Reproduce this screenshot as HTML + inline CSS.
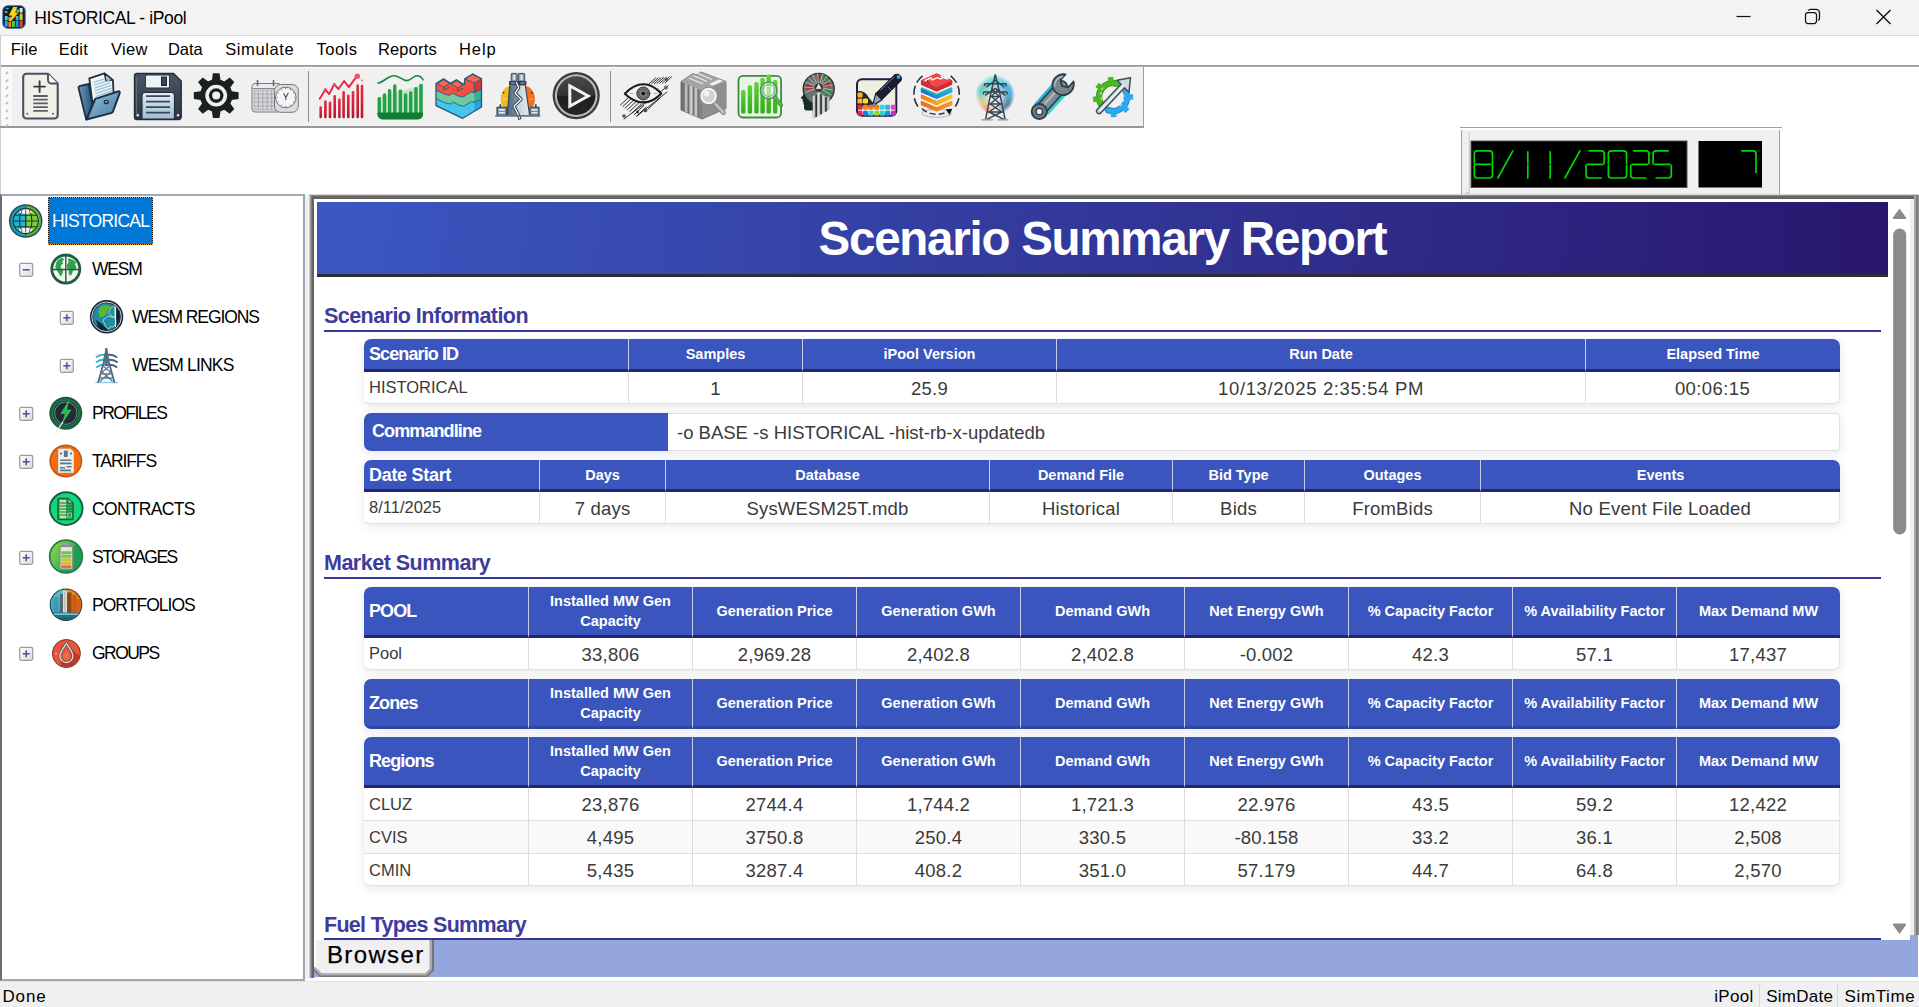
<!DOCTYPE html>
<html>
<head>
<meta charset="utf-8">
<title>HISTORICAL - iPool</title>
<style>
*{box-sizing:border-box;margin:0;padding:0}
html,body{width:1919px;height:1007px;overflow:hidden;background:#fff;font-family:"Liberation Sans",sans-serif;}
.abs{position:absolute}
#titlebar{position:absolute;left:0;top:0;width:1919px;height:35px;background:#f3f3f3}
#titlebar .ttl{position:absolute;left:34.300px;top:6px;letter-spacing:-0.36px;font-size:17.5px;line-height:24px;color:#000;white-space:nowrap}
#tline{position:absolute;left:0;top:35px;width:1919px;height:1px;background:#dadada}
#menubar{position:absolute;left:0;top:36px;width:1919px;height:29px;background:#fff}
#menubar span{position:absolute;top:1.300px;font-size:16.5px;line-height:24px;color:#000;white-space:nowrap}
#mline{position:absolute;left:0;top:65px;width:1919px;height:2px;background:linear-gradient(#8e8e8e,#b4b4b4)}
#toolbar{position:absolute;left:0;top:67px;width:1144px;height:61px;background:#f0f0f0;border-right:1px solid #a0a0a0;border-bottom:2px solid #979797;box-shadow:inset 0 1px 0 #fcfcfc}
#toolbar .grip{position:absolute;left:0;top:0;width:12px;height:59px;background:#f9f9f9;border-left:1px solid #cfcfcf}
#toolbar .sep{position:absolute;top:4px;width:1px;height:51px;background:#8f8f8f}
.ti{position:absolute;top:3px;width:52px;height:52px}
/* LED */
#led{position:absolute;left:1460px;top:127px;width:322px;height:68px;border-top:1px solid #a0a0a0}
#led .in{position:absolute;left:1px;top:2px;width:319px;height:66px;background:#f0f0f0;border-left:1px solid #a0a0a0;border-right:1px solid #a0a0a0}
/* tree */
#tree{position:absolute;left:0;top:194px;width:305px;height:787px;background:#fff;border-style:solid;border-color:#a4a8b2 #a2a6b0 #a2a6b0 #686d78;border-width:2px 2px 2px 2px}
#gap{position:absolute;left:305px;top:195px;width:4px;height:784px;background:#f0f0f0}
.tr{position:absolute;font-size:17.5px;line-height:24px;color:#000;white-space:nowrap}
.exp{position:absolute;width:13px;height:13px;border:1px solid #919191;background:linear-gradient(135deg,#fff,#e4e4e4);border-radius:1px}
.exp:before{content:"";position:absolute;left:2px;top:5px;width:7px;height:1px;background:#3c4a9a}
.exp.p:after{content:"";position:absolute;left:5px;top:2px;width:1px;height:7px;background:#3c4a9a}
.ic{position:absolute;width:36px;height:36px}
/* right panel */
#rp{position:absolute;left:309px;top:194px;width:1610px;height:787px;background:#fff}
#rp i{position:absolute;display:block}
#view{position:absolute;left:314px;top:199px;width:1596px;height:741px;overflow:hidden;background:#fff}
#hdr{position:absolute;left:3px;top:3px;width:1571px;height:75px;background:linear-gradient(95deg,#3b58c2 0%,#29166d 100%);border-bottom:3px solid #2e2e32;color:#fff;font-weight:700;font-size:47.5px;letter-spacing:-1.25px;text-align:center;line-height:73.5px;white-space:nowrap}
.h2{position:absolute;left:10px;font-weight:700;font-size:21.5px;line-height:26px;color:#3d3c9c;white-space:nowrap;letter-spacing:-0.55px}
.ul{position:absolute;left:10px;width:1557px;height:2px;background:#37379a}
table{position:absolute;left:50px;width:1476px;border-collapse:separate;border-spacing:0;table-layout:fixed;border-radius:6px;box-shadow:0 2px 9px 1px rgba(0,0,0,.085)}
th{background:#3a56be;color:#fff;font-weight:700;font-size:14.5px;line-height:20px;text-align:center;vertical-align:middle;border-bottom:3px solid #21276a;border-left:1px solid #c7cde9;padding:0;position:relative}
th:first-child{text-align:left;font-size:18px;letter-spacing:-0.9px;padding-left:5px;border-left:none;border-top-left-radius:7px}
th:last-child{border-top-right-radius:7px}
th i{position:absolute;left:-1px;top:0;width:1px;height:3px;background:#3a56be}
td{background:#fff;color:#3a3a3a;font-size:18.5px;text-align:center;vertical-align:middle;border-left:1px solid #dcdcdc;border-bottom:1px solid #dedede;padding:2px 0 0 0;letter-spacing:0.2px}
td:first-child{text-align:left;font-size:16.5px;padding:0 0 0 5px;border-left:none;letter-spacing:0}
tr.alt td{background:#f9f9f9}
table.reg td:first-child{padding:1px 0 0 5px}
tr:last-child td:first-child{border-bottom-left-radius:6px}
tr:last-child td:last-child{border-bottom-right-radius:6px}
td:last-child{border-right:1px solid #e2e2e2}
tr:last-child td{border-bottom:1px solid #e0e0e0}
table.nob th{border-bottom:3px solid #2f45a6}
table.nob th:first-child{border-bottom-left-radius:7px}
table.nob th:last-child{border-bottom-right-radius:7px}
#tabbar{position:absolute;left:314px;top:940px;width:1604px;height:37px;background:#95a6dc}
#tabbar2{position:absolute;left:1910px;top:935px;width:8px;height:5px;background:#95a6dc}
#status{position:absolute;left:0;top:981px;width:1919px;height:26px;background:#f0f0f0;border-top:1px solid #e2e2e2}
#status span{position:absolute;top:3.500px;font-size:17px;line-height:22px;white-space:nowrap;color:#000}
#status i{position:absolute;top:2px;width:1px;height:24px;background:#d7d7d7}

.cmd{position:absolute;left:50px;top:214px;width:1476px;height:38px;border-radius:7px 4px 4px 7px;background:#fff;box-shadow:0 2px 9px 1px rgba(0,0,0,.085)}
.cmd .cl{position:absolute;left:0;top:0;width:304px;height:38px;background:#3a56be;border-radius:7px 0 0 7px;color:#fff;font-weight:700;font-size:18px;letter-spacing:-0.9px;line-height:36px;padding-left:8px}
.cmd .cv{position:absolute;left:304px;top:0;width:1172px;height:38px;border:1px solid #e0e0e0;border-left:none;border-radius:0 4px 4px 0;color:#3a3a3a;font-size:18.5px;line-height:38px;padding-left:9px;white-space:nowrap}
.sb{position:absolute;left:1574px;top:-1px;width:22px;height:742px;background:#fff}
</style>
</head>
<body>
<div id="titlebar">
<svg class="abs" style="left:2px;top:5px" width="24" height="24" viewBox="2 5 24 24"><defs><linearGradient id="aY" x1="0" y1="0" x2="1" y2="1"><stop offset="0" stop-color="#fff21a"/><stop offset="1" stop-color="#f2a80e"/></linearGradient></defs><rect x="2.300" y="5.300" width="23.400" height="23.400" rx="5.500" fill="#2c62a6"/><rect x="3.300" y="6.300" width="21.400" height="21.400" rx="4.600" fill="#141c2e"/><rect x="4.800" y="16" width="2.900" height="4.300" fill="#34dcec"/><rect x="4.800" y="21" width="2.900" height="5.500" fill="#22b2ea"/><rect x="5.800" y="7.800" width="3" height="1.500" rx="0.700" fill="#22b8d8"/><rect x="4.800" y="11" width="2.600" height="2" fill="#f08a18"/><rect x="8.400" y="17" width="2.800" height="4" fill="#d8b018"/><rect x="8.400" y="22" width="2.800" height="5" fill="#f08a10"/><rect x="12" y="21" width="2.900" height="6" fill="#52c832"/><rect x="15.700" y="16" width="2.800" height="4.300" fill="#22c4ea"/><rect x="15.700" y="21" width="2.800" height="6" fill="#1a92f0"/><rect x="16.500" y="9.500" width="2.500" height="2.500" fill="#2cc8e0"/><rect x="19.600" y="8" width="3" height="4.500" fill="#dce9c2"/><rect x="19.600" y="13.500" width="3" height="6.800" fill="#e8c222"/><rect x="19.600" y="21" width="3" height="6" fill="#f0441a"/><path d="M13.300 7l4 0 -2 5.500 3.300 0 -8.800 10.300 2 -7.300 -3 0z" fill="url(#aY)"/></svg>
<div class="ttl">HISTORICAL - iPool</div>
<svg class="abs" style="left:1730px;top:5px" width="170" height="24" viewBox="0 0 170 24"><path d="M6.5 11.5h14" stroke="#111" stroke-width="1.2" fill="none"/><path d="M78 7.500h6a2.500 2.500 0 0 1 2.500 2.500v6a2.500 2.500 0 0 1 -2.500 2.500h-6a2.500 2.500 0 0 1 -2.500 -2.500v-6a2.500 2.500 0 0 1 2.500 -2.500z" stroke="#111" stroke-width="1.250" fill="none"/><path d="M78.300 5.600a2.600 2.600 0 0 1 2.300 -1.300h5.400a3.500 3.500 0 0 1 3.500 3.500v5.400a2.600 2.600 0 0 1 -1.300 2.300" stroke="#111" stroke-width="1.250" fill="none"/><path d="M146.500 5l14 14M160.500 5l-14 14" stroke="#111" stroke-width="1.4" fill="none"/></svg>
</div>
<div id="tline"></div>
<div id="menubar">
<span style="left:10.7px;letter-spacing:0.030px">File</span><span style="left:58.7px;letter-spacing:0.200px">Edit</span><span style="left:111.0px;letter-spacing:0.300px">View</span><span style="left:167.9px">Data</span><span style="left:225.2px;letter-spacing:0.600px">Simulate</span><span style="left:316.5px;letter-spacing:0.500px">Tools</span><span style="left:377.9px;letter-spacing:0.170px">Reports</span><span style="left:459.0px;letter-spacing:0.900px">Help</span>
</div>
<div id="mline"></div>
<div class="abs" style="left:0;top:36px;width:1px;height:158px;background:#cdcdcd"></div>
<div id="toolbar">
<div class="grip"><svg width="12" height="60" viewBox="0 0 12 60"><path d="M4.800 7.1l2.400 -2.400" stroke="#bdbdbd" stroke-width="1.600"/><path d="M4.800 14.9l2.400 -2.400" stroke="#bdbdbd" stroke-width="1.600"/><path d="M4.800 22.2l2.400 -2.400" stroke="#bdbdbd" stroke-width="1.600"/><path d="M4.800 30.0l2.400 -2.400" stroke="#bdbdbd" stroke-width="1.600"/><path d="M4.800 37.3l2.400 -2.400" stroke="#bdbdbd" stroke-width="1.600"/><path d="M4.800 45.1l2.400 -2.400" stroke="#bdbdbd" stroke-width="1.600"/><path d="M4.800 52.4l2.400 -2.400" stroke="#bdbdbd" stroke-width="1.600"/><path d="M4.800 59.7l2.400 -2.400" stroke="#bdbdbd" stroke-width="1.600"/></svg></div>
<div class="sep" style="left:308px"></div>
<div class="sep" style="left:610px"></div>
<svg class="abs" style="left:0;top:0" width="1144" height="60" viewBox="0 67 1144 60"><defs><linearGradient id="gRed" x1="0" y1="0" x2="0" y2="1"><stop offset="0" stop-color="#f02a44"/><stop offset="1" stop-color="#b4172e"/></linearGradient><linearGradient id="gFold" x1="0" y1="0" x2="1" y2="1"><stop offset="0" stop-color="#9cc3da"/><stop offset="1" stop-color="#3f7aa3"/></linearGradient><linearGradient id="gFoldB" x1="0" y1="0" x2="1" y2="0"><stop offset="0" stop-color="#6a9cc0"/><stop offset="1" stop-color="#274f75"/></linearGradient><linearGradient id="gFlop" x1="0" y1="0" x2="0" y2="1"><stop offset="0" stop-color="#4a5566"/><stop offset="1" stop-color="#2c3543"/></linearGradient><linearGradient id="gFlopL" x1="0" y1="0" x2="0" y2="1"><stop offset="0" stop-color="#e4edf3"/><stop offset="1" stop-color="#9fbdd2"/></linearGradient><linearGradient id="gPlay" x1="0" y1="0" x2="0" y2="1"><stop offset="0" stop-color="#4a4a4a"/><stop offset="0.5" stop-color="#333"/><stop offset="0.5" stop-color="#1e1e1e"/><stop offset="1" stop-color="#262626"/></linearGradient><linearGradient id="gGray" x1="0" y1="0" x2="1" y2="0"><stop offset="0" stop-color="#666"/><stop offset="0.5" stop-color="#b2b2b2"/><stop offset="1" stop-color="#7c7c7c"/></linearGradient><linearGradient id="gGrn" x1="0" y1="0" x2="0" y2="1"><stop offset="0" stop-color="#62d23a"/><stop offset="1" stop-color="#2fae1c"/></linearGradient><radialGradient id="gTow" cx="0.5" cy="0.5" r="0.5"><stop offset="0" stop-color="#ffffff" stop-opacity="0"/><stop offset="1" stop-color="#fff" stop-opacity="0"/></radialGradient><linearGradient id="gTowBg" x1="0.8" y1="0" x2="0.2" y2="1"><stop offset="0" stop-color="#8fdde6"/><stop offset="0.45" stop-color="#6fb0d2"/><stop offset="0.75" stop-color="#b9c6c8"/><stop offset="1" stop-color="#f2978a"/></linearGradient></defs><g><path d="M26.5 73.8h21.500l9.700 9.700v31.700a3.300 3.300 0 0 1 -3.300 3.300h-27.900a3.300 3.300 0 0 1 -3.300 -3.300v-38.100a3.300 3.300 0 0 1 3.300 -3.300z" fill="#f2f1e8" stroke="#44535f" stroke-width="2.100" stroke-linejoin="round"/><path d="M48 73.800v6.200a3.500 3.500 0 0 0 3.500 3.500h6.200" fill="#fbfbf6" stroke="#44535f" stroke-width="1.900" stroke-linejoin="round"/><path d="M34.200 86.600h10.800M39.600 81.200v10.800" stroke="#2f3d48" stroke-width="1.900" stroke-linecap="round"/><g stroke="#5a6066" stroke-width="1.800"><path d="M33.200 96h14.600M33.200 99.700h14.600M33.200 103.400h14.600M33.200 107.100h14.600M33.200 110.800h14.600"/></g><circle cx="27.300" cy="113.800" r="1" fill="#55626c"/><circle cx="53" cy="113.800" r="1" fill="#55626c"/></g><g stroke-linejoin="round"><path d="M78.600 88.300Q78 86.300 80.300 85.800L88.800 84L92.500 106L86.200 119.500Z" fill="url(#gFoldB)" stroke="#1c2f45" stroke-width="1.800"/><path d="M89.300 78.300L104.500 73.400L112.900 80.100L113.600 93.500L92.300 101.800Z" fill="#f2f5f5" stroke="#1c2f45" stroke-width="1.800"/><path d="M104.500 73.400l1.300 7.300 7.100 -0.600z" fill="#a9d1e4" stroke="#1c2f45" stroke-width="1.400"/><g stroke="#8fbdd6" stroke-width="1.200" fill="none"><path d="M93.500 82.500l10 -3.400M94 85.300l16.500 -5.600M94.400 88.100l16.500 -5.600M94.800 90.900l16.500 -5.600M95.200 93.700l16.500 -5.600M95.600 96.500l16.500 -5.600M96 99.300l12 -4.100"/></g><path d="M95.300 98.900L117.800 91.500Q120.400 90.800 119.600 93.300L113 111.500Q112.500 112.700 111 113.100L86.500 119.500Z" fill="url(#gFold)" stroke="#1c2f45" stroke-width="2"/><ellipse cx="106.300" cy="102" rx="2.700" ry="2.300" fill="#203349"/><rect x="105.100" y="101.300" width="2.400" height="1.100" fill="#c9dbe6"/></g><g><path d="M137 73.500h36.500l7.700 7.500v36a2.500 2.500 0 0 1 -2.500 2.500h-41.700a2.500 2.500 0 0 1 -2.500 -2.500v-41a2.500 2.500 0 0 1 2.500 -2.500z" fill="url(#gFlop)" stroke="#252d3a" stroke-width="1.400"/><path d="M136.500 77v38" stroke="#5f6b7c" stroke-width="1.200"/><rect x="145.500" y="75" width="24" height="13" rx="1.500" fill="#eef3f6" stroke="#2a3340" stroke-width="1"/><rect x="161.500" y="77" width="5" height="8.500" fill="#3a4454" stroke="#1f2732" stroke-width="1"/><path d="M142 119v-23.500a3 3 0 0 1 3 -3h26.500a3 3 0 0 1 3 3v23.500z" fill="url(#gFlopL)" stroke="#252d3a" stroke-width="1.200"/><g stroke="#38465a" stroke-width="1.700"><path d="M146 96.200h24M146 101.700h24M146 107.200h24M146 112.700h24"/></g><circle cx="137.800" cy="115.300" r="1.200" fill="#e6edf2"/><circle cx="178" cy="115.300" r="1.200" fill="#e6edf2"/></g><g><path d="M211.9 80.0 L212.9 73.2 L219.5 73.2 L220.5 80.0 L221.5 80.3 L222.4 80.6 L223.3 81.0 L224.2 81.5 L229.7 77.5 L234.3 82.1 L230.3 87.6 L230.8 88.5 L231.2 89.4 L231.5 90.3 L231.8 91.3 L238.6 92.3 L238.6 98.9 L231.8 99.9 L231.5 100.9 L231.2 101.8 L230.8 102.7 L230.3 103.6 L234.3 109.1 L229.7 113.7 L224.2 109.7 L223.3 110.2 L222.4 110.6 L221.5 110.9 L220.5 111.2 L219.5 118.0 L212.9 118.0 L211.9 111.2 L210.9 110.9 L210.0 110.6 L209.1 110.2 L208.2 109.7 L202.7 113.7 L198.1 109.1 L202.1 103.6 L201.6 102.7 L201.2 101.8 L200.9 100.9 L200.6 99.9 L193.8 98.9 L193.8 92.3 L200.6 91.3 L200.9 90.3 L201.2 89.4 L201.6 88.5 L202.1 87.6 L198.1 82.1 L202.7 77.5 L208.2 81.5 L209.1 81.0 L210.0 80.6 L210.9 80.3Z" fill="#1b2121"/><circle cx="216.200" cy="95.600" r="10.900" fill="#f0f0f0"/><circle cx="216.200" cy="95.600" r="7.300" fill="#1b2121"/><circle cx="216.200" cy="95.600" r="4" fill="#f0f0f0"/></g><g><rect x="252" y="83.500" width="29" height="28.500" rx="3" fill="#ececef" stroke="#77777d" stroke-width="1"/><path d="M252 88.500h29" stroke="#85858a" stroke-width="1"/><path d="M257.500 80.500v5M273.500 80.500v5" stroke="#6a6a70" stroke-width="1.600" stroke-linecap="round"/><rect x="254" y="90" width="22" height="20" fill="#d6d6da"/><path d="M254.0 90v20" stroke="#9a9aa0" stroke-width="0.700"/><path d="M258.4 90v20" stroke="#9a9aa0" stroke-width="0.700"/><path d="M262.8 90v20" stroke="#9a9aa0" stroke-width="0.700"/><path d="M267.2 90v20" stroke="#9a9aa0" stroke-width="0.700"/><path d="M271.6 90v20" stroke="#9a9aa0" stroke-width="0.700"/><path d="M276.0 90v20" stroke="#9a9aa0" stroke-width="0.700"/><path d="M254 90.0h22" stroke="#9a9aa0" stroke-width="0.700"/><path d="M254 94.0h22" stroke="#9a9aa0" stroke-width="0.700"/><path d="M254 98.0h22" stroke="#9a9aa0" stroke-width="0.700"/><path d="M254 102.0h22" stroke="#9a9aa0" stroke-width="0.700"/><path d="M254 106.0h22" stroke="#9a9aa0" stroke-width="0.700"/><path d="M254 110.0h22" stroke="#9a9aa0" stroke-width="0.700"/><rect x="274.500" y="84.500" width="23.800" height="27.800" rx="6" fill="#dcdce0" stroke="#77777d" stroke-width="1"/><circle cx="285.800" cy="97.500" r="10.300" fill="#f6f6f7" stroke="#707076" stroke-width="1"/><path d="M285.800 97.500l-2 -3.800M285.800 97.500l2.300 -4.300M285.800 97.500v2" stroke="#4a4a50" stroke-width="1.100" stroke-linecap="round"/><path d="M294.1 97.5L295.3 97.5" stroke="#66666c" stroke-width="0.900"/><path d="M293.0 101.7L294.0 102.2" stroke="#66666c" stroke-width="0.900"/><path d="M289.9 104.7L290.6 105.7" stroke="#66666c" stroke-width="0.900"/><path d="M285.8 105.8L285.8 107.0" stroke="#66666c" stroke-width="0.900"/><path d="M281.7 104.7L281.1 105.7" stroke="#66666c" stroke-width="0.900"/><path d="M278.6 101.7L277.6 102.2" stroke="#66666c" stroke-width="0.900"/><path d="M277.5 97.5L276.3 97.5" stroke="#66666c" stroke-width="0.900"/><path d="M278.6 93.4L277.6 92.8" stroke="#66666c" stroke-width="0.900"/><path d="M281.7 90.3L281.1 89.3" stroke="#66666c" stroke-width="0.900"/><path d="M285.8 89.2L285.8 88.0" stroke="#66666c" stroke-width="0.900"/><path d="M289.9 90.3L290.6 89.3" stroke="#66666c" stroke-width="0.900"/><path d="M293.0 93.3L294.0 92.8" stroke="#66666c" stroke-width="0.900"/></g><g><rect x="319.4" y="106.3" width="2.600" height="12.0" rx="1.200" fill="url(#gRed)"/><rect x="324.1" y="100.2" width="2.600" height="18.1" rx="1.200" fill="url(#gRed)"/><rect x="328.7" y="101.6" width="2.600" height="16.7" rx="1.200" fill="url(#gRed)"/><rect x="333.4" y="95.0" width="2.600" height="23.3" rx="1.200" fill="url(#gRed)"/><rect x="338.1" y="98.4" width="2.600" height="19.9" rx="1.200" fill="url(#gRed)"/><rect x="342.3" y="90.9" width="2.600" height="27.4" rx="1.200" fill="url(#gRed)"/><rect x="347.0" y="94.6" width="2.600" height="23.7" rx="1.200" fill="url(#gRed)"/><rect x="351.7" y="90.9" width="2.600" height="27.4" rx="1.200" fill="url(#gRed)"/><rect x="356.4" y="84.3" width="2.600" height="34.0" rx="1.200" fill="url(#gRed)"/><rect x="360.7" y="84.8" width="2.600" height="33.5" rx="1.200" fill="url(#gRed)"/><path d="M319.700 98.800L325.400 89.500 329.100 94.100 334.300 84.300 338.500 89 344.100 81 348.800 87.100 356.800 76.200" fill="none" stroke="#ec2440" stroke-width="1.900" stroke-linejoin="round" stroke-linecap="round"/><circle cx="357.300" cy="76.300" r="2.700" fill="#f0506a"/><circle cx="362.200" cy="80.300" r="0.900" fill="#f0506a"/><circle cx="325.300" cy="89.400" r="1.500" fill="#f0506a"/><circle cx="334.300" cy="84.300" r="1.400" fill="#f0506a"/></g><g><path d="M377.500 98v16.500a5 5 0 0 0 5 5h35.500a5 5 0 0 0 5 -5v-30z" fill="#bfe2c5" opacity="0.850"/><rect x="377.6" y="97.0" width="3.400" height="19.0" rx="1.500" fill="#22a147"/><rect x="382.8" y="93.2" width="3.400" height="22.8" rx="1.500" fill="#22a147"/><rect x="387.9" y="89.0" width="3.400" height="27.0" rx="1.500" fill="#22a147"/><rect x="393.1" y="84.3" width="3.400" height="31.7" rx="1.500" fill="#22a147"/><rect x="398.7" y="89.5" width="3.400" height="26.5" rx="1.500" fill="#22a147"/><rect x="403.9" y="93.2" width="3.400" height="22.8" rx="1.500" fill="#22a147"/><rect x="409.0" y="91.3" width="3.400" height="24.7" rx="1.500" fill="#22a147"/><rect x="414.2" y="87.1" width="3.400" height="28.9" rx="1.500" fill="#22a147"/><rect x="419.3" y="83.8" width="3.400" height="32.2" rx="1.500" fill="#22a147"/><path d="M377.500 112.500h45.500v2a5 5 0 0 1 -5 5h-35.500a5 5 0 0 1 -5 -5z" fill="#0f7d32"/><path d="M378 83c5 0 9.500 -7.200 16 -7.200c6 0 8 4.800 12.500 4.800c5 0 6.500 -4.800 10.500 -4.800c3.500 0 5 2.200 6 4" fill="none" stroke="#17863a" stroke-width="1.600" stroke-linecap="round"/></g><g stroke-linejoin="round"><path d="M436 98.600L445 102.800 450.400 104 453.400 102.200 458.800 105.100 463.600 106.300 471.300 101.600 474.300 102.200 481.500 99.200V107L462.700 118.300 436 105.700Z" fill="#45c5ea"/><path d="M474.300 102.200L481.500 99.200V107L474.300 111.300Z" fill="#25a5d8"/><path d="M436 90.200L445 94.400 449.800 95.300 452.800 93.200 458.800 96.200 463.600 96.800 470.700 92 474.300 92.600 481.500 89V99.200L474.300 102.200 471.300 101.600 463.600 106.300 458.800 105.100 453.400 102.200 450.400 104 445 102.800 436 98.600Z" fill="#6fc9a0"/><path d="M474.300 92.600L481.500 89V99.200L474.300 102.200Z" fill="#3aae90"/><path d="M436 83.600L443.500 78.800 450.400 83.300 456.400 79.700 464.200 84.800 464.800 78.800 472.800 74 481.500 78.800V89L474.300 92.600 470.700 92 463.600 96.800 458.800 96.200 452.800 93.200 449.800 95.300 445 94.400 436 90.200Z" fill="#f4503f"/><path d="M474.300 83L481.500 78.800V89L474.300 92.600Z" fill="#d8362e"/><path d="M464.800 78.800L472.800 74 481.500 78.800 474.300 83Z" fill="#f8645a" stroke="#1f5a7d" stroke-width="0.900"/><path d="M437 83.700L443.500 79.600 449.800 83.600 444 87.200Z" fill="#f8645a" stroke="#1f5a7d" stroke-width="0.900"/><path d="M451 83.800L456.400 80.500 463 84.800 457.500 88Z" fill="#f8645a" stroke="#1f5a7d" stroke-width="0.900"/><path d="M444 87.200v3l5.800 -3.300M457.500 88v3.200l5.500 -3M464.500 79v6M474.300 83v9.600" fill="none" stroke="#1f5a7d" stroke-width="0.900"/><path d="M436 90.200L445 94.400 449.800 95.300 452.800 93.200 458.800 96.200 463.600 96.800 470.700 92 474.300 92.600 481.500 89M436 98.600L445 102.800 450.400 104 453.400 102.200 458.800 105.100 463.600 106.300 471.300 101.600 474.300 102.200 481.500 99.200" fill="none" stroke="#1f5a7d" stroke-width="0.900"/><path d="M436 83.600L443.500 78.800 450.400 83.300 456.400 79.700 464.200 84.800 464.800 78.800 472.800 74 481.500 78.800V107L462.700 118.300 436 105.700Z" fill="none" stroke="#1f5a7d" stroke-width="1.300"/></g><defs><linearGradient id="gDamL" x1="0" y1="0" x2="1" y2="0"><stop offset="0" stop-color="#49667f"/><stop offset="1" stop-color="#8ba4b5"/></linearGradient><linearGradient id="gDamR" x1="0" y1="0" x2="1" y2="0"><stop offset="0" stop-color="#b9c9d1"/><stop offset="1" stop-color="#e6edf0"/></linearGradient></defs><g stroke-linejoin="round"><path d="M509.700 86c-5.500 1 -9 7 -9 13c0 3.500 0.800 6 1.800 8h7.200z" fill="#f5b921"/><path d="M525.900 86c5.500 1 9 7 9 13c0 3.500 -0.800 6 -1.800 8h-7.200z" fill="#f26f1c"/><rect x="503" y="98.500" width="3.500" height="1.200" fill="#f8da7a"/><rect x="529.500" y="98.500" width="3.500" height="1.200" fill="#f8a86a"/><circle cx="503.600" cy="92.600" r="0.900" fill="#3a3020"/><circle cx="532" cy="92.600" r="0.900" fill="#3a3020"/><path d="M509.700 85.400h8l1 3 -3.600 5 6 6 -7.200 7 4.200 8 0.500 1.500h-11.500z" fill="url(#gDamL)"/><path d="M517.700 85.400h7.600l4.200 30h-11.400l-4.200 -8 7.200 -7 -6 -6 3.600 -5z" fill="url(#gDamR)"/><path d="M507.200 115.500l2.500 -30M529.600 115.500l-4.300 -30" stroke="#2e4258" stroke-width="1.100" fill="none"/><rect x="511.200" y="73.400" width="6" height="8" rx="0.800" fill="#8fa2b0" stroke="#2e4258" stroke-width="0.900"/><rect x="518.200" y="73.400" width="6.500" height="8" rx="0.800" fill="#8fa2b0" stroke="#2e4258" stroke-width="0.900"/><rect x="513.200" y="75" width="2" height="5" fill="#dfe7ec"/><rect x="520.500" y="75" width="2" height="5" fill="#dfe7ec"/><rect x="509" y="80.900" width="17.500" height="4.500" rx="0.800" fill="#2e4258"/><rect x="511" y="82.500" width="4" height="1.200" fill="#8fa2b0"/><rect x="520.500" y="82.500" width="4" height="1.200" fill="#8fa2b0"/><path d="M516.300 82l2.400 5.800 -3.600 5.400 6 6 -7.200 7.100 4.200 7.800 1.800 5.400" fill="none" stroke="#26384a" stroke-width="3.200"/><path d="M516.300 82l2.400 5.800 -3.600 5.400 6 6 -7.200 7.100 4.200 7.800 1.500 4.500" fill="none" stroke="#fff" stroke-width="1.300"/><rect x="497" y="107.300" width="9.700" height="8" fill="#7c8e9c" stroke="#2c3e50" stroke-width="1.100"/><rect x="529.800" y="107.300" width="9.200" height="8" fill="#7c8e9c" stroke="#2c3e50" stroke-width="1.100"/><rect x="498.800" y="109" width="6" height="1.800" fill="#dfe7ec"/><rect x="498.800" y="112" width="6" height="1.600" fill="#dfe7ec"/><rect x="531.500" y="109" width="6" height="1.800" fill="#dfe7ec"/><rect x="531.500" y="112" width="6" height="1.600" fill="#dfe7ec"/><rect x="499.500" y="104.300" width="1.600" height="3" fill="#2c3e50"/><rect x="535" y="104.300" width="1.600" height="3" fill="#2c3e50"/><path d="M495.300 115.800h44.900" stroke="#5f7386" stroke-width="1.800"/></g><g><circle cx="576.200" cy="95.600" r="23.600" fill="#3c3c3c"/><circle cx="576.200" cy="95.600" r="21.300" fill="#bdbdbd"/><circle cx="576.200" cy="95.600" r="19.300" fill="url(#gPlay)"/><path d="M569.800 85.800v20.400l18.400 -10.200z" fill="#3a3a3a" stroke="#f2f2f2" stroke-width="3" stroke-linejoin="miter"/></g><g stroke="#1a1a1a" stroke-linecap="round"><path d="M649.0 84.0l6.5 -6" stroke-width="0.900"/><path d="M651.7 83.8l6.5 -6" stroke-width="0.900"/><path d="M654.4 83.6l6.5 -6" stroke-width="0.900"/><path d="M657.1 83.4l6.5 -6" stroke-width="0.900"/><path d="M659.8 83.2l6.5 -6" stroke-width="0.900"/><path d="M662.5 83.0l6.5 -6" stroke-width="0.900"/><path d="M665.2 82.8l6.5 -6" stroke-width="0.900"/><path d="M630.0 96.0L620.5 105.0" stroke-width="0.900"/><path d="M632.3 97.6L622.8 106.6" stroke-width="0.900"/><path d="M634.6 99.2L625.1 108.2" stroke-width="0.900"/><path d="M636.9 100.8L627.4 109.8" stroke-width="0.900"/><path d="M639.2 102.4L629.7 111.4" stroke-width="0.900"/><path d="M641.5 104.0L632.0 113.0" stroke-width="0.900"/><path d="M643.8 105.6L634.3 114.6" stroke-width="0.900"/><path d="M646.1 107.2L636.6 116.2" stroke-width="0.900"/><path d="M668 86l-44 33M667 92l-30 24M660 98l-12 11" stroke-width="0.900"/><circle cx="666.500" cy="79.500" r="1.700" fill="#555" stroke="none"/><circle cx="666" cy="87.500" r="2" fill="#666" stroke="none"/><circle cx="624" cy="116" r="1.800" fill="#555" stroke="none"/><circle cx="637.500" cy="112" r="1.500" fill="#333" stroke="none"/><circle cx="645.500" cy="110.500" r="1.800" fill="#444" stroke="none"/><path d="M624.800 93.700c8 -8.500 14 -9.500 18.700 -9.500c6 0 11.500 2.500 17.800 9.300c-6.500 7 -12 8.900 -17.800 8.900c-5.500 0 -11 -1.500 -18.700 -8.700z" fill="#f0f0f0" stroke-width="2.100" stroke-linejoin="round"/><circle cx="643.300" cy="93.500" r="6.500" fill="#6e6e6e" stroke-width="0.800"/><circle cx="643.300" cy="93.500" r="4" fill="#8a8a8a" stroke="#444" stroke-width="0.600"/><circle cx="643.300" cy="93.500" r="2" fill="#111" stroke="none"/><path d="M630 93.500h3M654 93.500h3" stroke="#999" stroke-width="0.800"/></g><g stroke-linejoin="round"><path d="M681 81.500l12 -8 3 1.500 5 -3 25 9.500v27l-24 10.500 -21 -9z" fill="#8c8c8c" stroke="#6a6a6a" stroke-width="0.900"/><path d="M681 81.500l21 8.500v29l-21 -9z" fill="url(#gGray)"/><path d="M702 90l24 -9.500v27.500l-24 10.500z" fill="#8e8e8e"/><path d="M681 81.500l12 -8 3 1.500 5 -3 25 9.500 -24 9.500z" fill="#a4a4a4"/><g stroke="#dcdcdc" stroke-width="1.200"><path d="M686 84v28M691 86v28M696 88v28"/></g><g stroke="#6e6e6e" stroke-width="1.100"><path d="M688.500 85v28M693.500 87v28M698.500 89v28"/></g><path d="M689 78l14 6M693 75.500l14 6M698 73.500l14 6" stroke="#ededed" stroke-width="1.200"/><path d="M709 84l10 -4.500 4 1.500 -10 4.500z" fill="#f3f3f3"/><path d="M714.500 103l9 9.500" stroke="#8a8a8a" stroke-width="5" stroke-linecap="round"/><path d="M715.500 104l8 8.500" stroke="#c9c9c9" stroke-width="2.500" stroke-linecap="round"/><circle cx="708.600" cy="96" r="8.800" fill="#e2e2e2" stroke="#8c8c8c" stroke-width="1"/><circle cx="708.600" cy="96" r="7" fill="#d2d2d2" stroke="#fafafa" stroke-width="1.300"/><circle cx="706.500" cy="93.500" r="3" fill="#f3f3f3"/></g><g><rect x="738.500" y="75.800" width="42.600" height="41.700" rx="4.500" fill="#eaf3e6" stroke="#3c8c42" stroke-width="1.800"/><rect x="741.1" y="90.0" width="4.400" height="23.5" rx="1.500" fill="url(#gGrn)"/><rect x="747.7" y="85.2" width="4.400" height="28.3" rx="1.500" fill="url(#gGrn)"/><rect x="754.3" y="82.0" width="4.400" height="31.5" rx="1.500" fill="url(#gGrn)"/><rect x="760.4" y="77.7" width="4.400" height="35.8" rx="1.500" fill="url(#gGrn)"/><rect x="766.5" y="74.4" width="4.400" height="39.1" rx="1.500" fill="url(#gGrn)"/><rect x="773.0" y="80.0" width="4.400" height="33.5" rx="1.500" fill="url(#gGrn)"/><path d="M774.500 97l6.500 8" stroke="#3f9f34" stroke-width="4.200" stroke-linecap="round"/><path d="M774.800 97.300l6 7.500" stroke="#58c03e" stroke-width="1.800" stroke-linecap="round"/><circle cx="768.700" cy="90.400" r="8.300" fill="#ffffff" fill-opacity="0.550" stroke="#4f8f62" stroke-width="1.500"/><circle cx="768.700" cy="90.400" r="6" fill="none" stroke="#6aa57a" stroke-width="0.900"/></g><g><path d="M805 92l-1.800 3 -2.600 3.300 2.200 1 -0.300 2.200 1.300 0.800 -0.600 1.700 1 1 -0.200 3c0 1.600 1 2.400 2.800 2.400h6v8l15.500 -9v-13l-8 -8z" fill="#1b2a24"/><circle cx="818.700" cy="88.900" r="15.500" fill="#66716c" stroke="#25332d" stroke-width="1.300"/><path d="M814.7 88.1L806.3 89.2A12.5 12.5 0 0 1 806.7 84.1L814.9 86.4Z" fill="#b8242c"/><path d="M822.2 85.5L828.7 81.8A11.5 11.5 0 0 1 830.2 87.1L822.7 87.4Z" fill="#b8242c"/><path d="M817.9 81.6L817.0 75.1A12.5 12.5 0 0 1 820.9 75.2L819.7 81.6Z" fill="#b8242c"/><path d="M822.0 81.3L824.8 76.0A13 13 0 0 1 828.4 78.8L823.9 82.8Z" fill="#2f8f3e"/><path d="M824.6 88.7L830.9 90.1A12.5 12.5 0 0 1 828.0 95.9L823.2 91.5Z" fill="#2f8f3e"/><path d="M814.9 88.9L805.4 92.4" stroke="#c9cfcc" stroke-width="0.750"/><path d="M814.7 87.4L804.5 87.3" stroke="#c9cfcc" stroke-width="0.750"/><path d="M815.0 86.0L805.5 82.2" stroke="#c9cfcc" stroke-width="0.750"/><path d="M815.8 84.8L808.3 77.8" stroke="#c9cfcc" stroke-width="0.750"/><path d="M816.9 83.9L812.5 74.7" stroke="#c9cfcc" stroke-width="0.750"/><path d="M818.4 83.5L817.5 73.4" stroke="#c9cfcc" stroke-width="0.750"/><path d="M819.8 83.7L822.6 73.9" stroke="#c9cfcc" stroke-width="0.750"/><path d="M821.1 84.3L827.2 76.2" stroke="#c9cfcc" stroke-width="0.750"/><path d="M822.1 85.4L830.7 80.0" stroke="#c9cfcc" stroke-width="0.750"/><path d="M822.6 86.7L832.6 84.8" stroke="#c9cfcc" stroke-width="0.750"/><path d="M822.6 88.2L832.7 90.0" stroke="#c9cfcc" stroke-width="0.750"/><path d="M822.1 89.6L830.9 94.8" stroke="#c9cfcc" stroke-width="0.750"/><circle cx="818.700" cy="87.500" r="4.200" fill="#2b3631"/><path d="M818.700 82.800l3.300 6.400h-6.600z" fill="#eef0ef" stroke="#2b3631" stroke-width="0.600"/><path d="M812.800 96l6 -4.500 6 4.500 4.600 1v12.500l-15.600 8.900z" fill="#aab0ad"/><path d="M813.6 96.3V118.5" stroke="#d9dcda" stroke-width="1.700"/><path d="M816.2 94.4V117.0" stroke="#2a3a32" stroke-width="1.700"/><path d="M818.5 92.7V115.7" stroke="#d9dcda" stroke-width="1.700"/><path d="M821 94.2V114.3" stroke="#2a3a32" stroke-width="1.700"/><path d="M823.4 96.0V112.9" stroke="#d9dcda" stroke-width="1.700"/><path d="M826 97.0V111.4" stroke="#2a3a32" stroke-width="1.700"/><path d="M828.3 97.0V110.1" stroke="#c2c7c4" stroke-width="1.700"/></g><g><rect x="857" y="79.300" width="39.300" height="36.400" rx="5" fill="#eeefe2" stroke="#1e2040" stroke-width="2"/><path d="M857.500 91c5 -0.500 7.500 1 10 4.500c2.500 3.500 4 6 7 8l3 1.500v2h-20z" fill="#2a2438"/><rect x="857.5" y="92.4" width="5" height="5" rx="1.200" fill="#f8b818"/><rect x="857.5" y="98.5" width="5" height="5" rx="1.200" fill="#f8b818"/><rect x="863.0" y="98.5" width="5" height="5" rx="1.200" fill="#f8e020"/><rect x="857.5" y="104.8" width="5" height="5" rx="1.200" fill="#f02040"/><rect x="863.0" y="104.8" width="5" height="5" rx="1.200" fill="#f88018"/><rect x="868.4" y="104.8" width="5" height="5" rx="1.200" fill="#f07818"/><rect x="874.2" y="104.8" width="5" height="5" rx="1.200" fill="#f08018"/><rect x="879.6" y="104.8" width="5" height="5" rx="1.200" fill="#28d8f8"/><rect x="885.1" y="104.8" width="5" height="5" rx="1.200" fill="#20b8f8"/><rect x="890.9" y="104.8" width="5" height="5" rx="1.200" fill="#f838c8"/><rect x="857.5" y="110.7" width="5" height="5" rx="1.200" fill="#f02050"/><rect x="863.0" y="110.7" width="5" height="5" rx="1.200" fill="#1880e0"/><rect x="868.4" y="110.7" width="5" height="5" rx="1.200" fill="#30d0e8"/><rect x="874.2" y="110.7" width="5" height="5" rx="1.200" fill="#90d818"/><rect x="879.6" y="110.7" width="5" height="5" rx="1.200" fill="#28d0d0"/><rect x="885.1" y="110.7" width="5" height="5" rx="1.200" fill="#1888f0"/><rect x="890.9" y="110.7" width="5" height="5" rx="1.200" fill="#c030c8"/><path d="M894.800 74.600a4.600 4.600 0 0 1 6.200 6.200l-19 19 -6.300 -6.300z" fill="#1b1b32" stroke="#11111f" stroke-width="0.800"/><path d="M875.700 93.500l6.300 6.300 -6.800 4.400 -1.800 -1.800z" fill="#9aa0b0" stroke="#1b1b32" stroke-width="1.100"/><path d="M880.500 90.500l13.500 -13.500M888 87l4 4" stroke="#7f86a0" stroke-width="0.900"/><circle cx="898.500" cy="77" r="1.900" fill="#1fb0e0"/><circle cx="874.200" cy="104.800" r="1.600" fill="#27a7d6"/></g><defs><linearGradient id="gL1" x1="0" y1="0" x2="1" y2="0"><stop offset="0" stop-color="#f06a16"/><stop offset="1" stop-color="#f8982a"/></linearGradient><linearGradient id="gL2" x1="0" y1="0" x2="1" y2="0"><stop offset="0" stop-color="#f08018"/><stop offset="1" stop-color="#f8cc22"/></linearGradient><linearGradient id="gL3" x1="0" y1="0" x2="1" y2="0"><stop offset="0" stop-color="#166ee4"/><stop offset="1" stop-color="#2aaaf2"/></linearGradient></defs><g><path d="M922.6 75.8A22.7 22.7 0 0 0 919.2 108.3M950.6 75.8A22.7 22.7 0 0 1 954.0 108.3" fill="none" stroke="#2a3440" stroke-width="1.600" stroke-dasharray="9 3.500"/><ellipse cx="936.600" cy="113.300" rx="14.500" ry="4" fill="none" stroke="#c6cedb" stroke-width="1.800"/><path d="M922 108.600c3 3.500 9 5.600 14.600 5.600c4 0 8 -0.800 11 -2.300" fill="none" stroke="#2a3440" stroke-width="1.500" stroke-dasharray="6 3"/><path d="M945.800 109.200l6.500 -0.400 -2.800 6.300z" fill="#10161c"/><path d="M921.400 101.3L936.600 107.7L951.800 101.3V104.6L936.600 111.0L921.400 104.6Z" fill="url(#gL1)" stroke-linejoin="round" stroke="url(#gL1)" stroke-width="1.200"/><path d="M921.400 100.400L936.600 106.800L951.800 100.400L936.600 95Z" fill="#f4f1ea"/><path d="M921.400 94.9L936.600 101.3L951.800 94.9V98.2L936.600 104.6L921.400 98.2Z" fill="url(#gL2)" stroke-linejoin="round" stroke="url(#gL2)" stroke-width="1.200"/><path d="M921.400 94L936.600 100.400L951.800 94L936.600 88.500Z" fill="#f4f1ea"/><path d="M921.400 88.6L936.600 95.0L951.800 88.6V92.0L936.600 98.4L921.400 92.0Z" fill="url(#gL3)" stroke-linejoin="round" stroke="url(#gL3)" stroke-width="1.200"/><path d="M921.400 87L936.600 93.400L951.800 87V88.800L936.600 95.200L921.400 88.800Z" fill="#2fc08e"/><path d="M921.400 80.600L936.600 73.800L951.800 80.600V84.500L936.600 91.200L921.400 84.500Z" fill="#d22c3c" stroke="#c02838" stroke-width="1" stroke-linejoin="round"/><path d="M921.400 80.600L936.600 73.800L951.800 80.600L936.600 87.600Z" fill="#f2444c"/><path d="M924.500 80.800l6.500 -3 1 2.200 5.500 -2.400 3 1.600 3.500 -2 4 2.200" fill="none" stroke="#fbe9e6" stroke-width="1.500" stroke-linejoin="round"/><path d="M940.500 76l5.500 2.400 3.300 -1.200" fill="none" stroke="#f7f7f7" stroke-width="1.600"/><path d="M929.800 83.400l-2.200 -1 0 -1.800" fill="none" stroke="#2a3440" stroke-width="0.900"/></g><defs><clipPath id="cTow"><circle cx="995" cy="94.900" r="19.700"/></clipPath><filter id="fTow" x="-30%" y="-30%" width="160%" height="160%"><feGaussianBlur stdDeviation="3.200"/></filter><radialGradient id="gTowM" cx="0.5" cy="0.5" r="0.5"><stop offset="0.780" stop-color="#fff"/><stop offset="1" stop-color="#fff" stop-opacity="0"/></radialGradient><mask id="mTow"><circle cx="995" cy="94.900" r="20.500" fill="url(#gTowM)"/></mask></defs><g mask="url(#mTow)"><g clip-path="url(#cTow)"><rect x="974" y="74" width="42" height="42" fill="#e9f3f4"/><g filter="url(#fTow)"><circle cx="996" cy="78" r="11" fill="#79e0e8"/><circle cx="981" cy="90" r="9" fill="#6fd2c2"/><circle cx="1010" cy="90" r="10" fill="#58b4e0"/><circle cx="1008" cy="106" r="9" fill="#4f7e9c"/><circle cx="983" cy="103" r="6" fill="#e6c878"/><circle cx="986" cy="111" r="5.500" fill="#f07e6e"/><circle cx="996" cy="99" r="7" fill="#f2f5f5"/></g></g></g><g stroke="#39434f" stroke-width="1.450" fill="none" stroke-linejoin="round"><path d="M995.300 74.500l-4.200 17.500 -5.600 27.500M995.300 74.500l4.200 17.500 5.600 27.500"/><path d="M984.500 83.800h21.600M986.200 87.200l9.100 -6.800 9.100 6.800M983.500 91.900h23.600M985.200 95.400l10.100 -7 10.100 7"/><path d="M984.500 83.800v2.400M1006.100 83.800v2.400M983.500 91.900v2.700M1007.100 91.900v2.700"/><path d="M991.700 88.500l7.400 8 -8.800 7.500 11.300 8 -14.800 7.300M998.900 88.500l-7.400 8 8.800 7.500 -11.300 8 14.800 7.300"/><path d="M990.700 96.500h9.200M989.200 104h12.200M987.300 112h16"/><path d="M981.500 119.800h11.500M997.500 119.800h11" stroke-width="1.300" stroke="#8d949c"/></g><g stroke-linejoin="round" stroke-linecap="round"><path d="M1036 104l22 -25" stroke="#25b9e3" stroke-width="3"/><path d="M1048 113l19 -21" stroke="#2fd2c9" stroke-width="3"/><path d="M1039 111.500l22.500 -25" stroke="#2f3b45" stroke-width="13"/><path d="M1039 111.500l22.500 -25" stroke="#7d8b94" stroke-width="9.500"/><path d="M1041 108l19 -21" stroke="#aab6bd" stroke-width="2.500"/><circle cx="1039.300" cy="111.500" r="7.600" fill="#6e7b84" stroke="#2f3b45" stroke-width="1.800"/><circle cx="1039.300" cy="111.500" r="3.200" fill="#f0f0f0" stroke="#2f3b45" stroke-width="1.300"/><path d="M1065.500 74.500c-7 -1.500 -13.500 4 -13 11c0.400 6 6 10.500 12 9.500c6 -1 10.500 -6.500 9 -13.500l-5.500 6 -6 -1.500 -1.500 -6z" fill="#77858e" stroke="#2f3b45" stroke-width="1.800"/><path d="M1054.500 86c0 -5 3.500 -8.500 8 -9.500" fill="none" stroke="#b5c0c6" stroke-width="1.500"/></g><g><path d="M1100.9 104.0A14.0 14.0 0 0 1 1116.6 83.5" fill="none" stroke="#3a8f1a" stroke-width="6.6" stroke-linecap="round"/><path d="M1100.9 104.0A14.0 14.0 0 0 1 1116.6 83.5" fill="none" stroke="#4cb81f" stroke-width="5.0" stroke-linecap="round"/><path d="M1097.1 99.1L1093.1 99.6" stroke="#4cb81f" stroke-width="5.500" stroke-linecap="butt"/><path d="M1100.3 87.3L1097.1 84.8" stroke="#4cb81f" stroke-width="5.500" stroke-linecap="butt"/><path d="M1110.9 81.1L1110.4 77.1" stroke="#4cb81f" stroke-width="5.500" stroke-linecap="butt"/><path d="M1126.0 91.8A14.0 14.0 0 0 1 1108.2 110.2" fill="none" stroke="#1a7fc0" stroke-width="6.6" stroke-linecap="round"/><path d="M1126.0 91.8A14.0 14.0 0 0 1 1108.2 110.2" fill="none" stroke="#2ba9f1" stroke-width="5.0" stroke-linecap="round"/><path d="M1129.0 97.0L1133.1 97.0" stroke="#2ba9f1" stroke-width="5.500" stroke-linecap="butt"/><path d="M1124.5 108.1L1127.5 111.0" stroke="#2ba9f1" stroke-width="5.500" stroke-linecap="butt"/><path d="M1113.6 113.0L1113.7 117.1" stroke="#2ba9f1" stroke-width="5.500" stroke-linecap="butt"/><path d="M1103 87.500a12 12 0 0 0 0 14M1120 106a12 12 0 0 0 3.500 -12" fill="none" stroke="#d0d6d8" stroke-width="1.200" stroke-dasharray="3 2"/><path d="M1098.500 113.500a2.300 2.300 0 0 1 -1.500 -3.800l24 -25.500 -4 -4 13.500 -2.500 -1.500 14.500 -4.500 -4.500 -23.500 25a2.300 2.300 0 0 1 -2.500 0.800z" fill="#cfdcdc" stroke="#3a5058" stroke-width="1.500" stroke-linejoin="round"/><path d="M1100 110.500l24 -25.500" stroke="#eef4f4" stroke-width="1.200"/></g></svg>
</div>
<div id="led"><div class="in"></div>
<svg class="abs" style="left:0;top:0" width="322" height="68" viewBox="1460 127 322 68"><path d="M1469.500 131v61h-4" fill="none" stroke="#c4c4c4" stroke-width="1.400"/><path d="M1470.300 131v61" fill="none" stroke="#fff" stroke-width="1"/><rect x="1471" y="140" width="216" height="46.500" fill="#000" stroke="#555" stroke-width="1"/><rect x="1698.500" y="140" width="63.500" height="46.500" fill="#000"/><path d="M1477.3 149.8H1489.5M1492.5 152.8V162.4M1492.5 164.4V174.0M1477.3 177.0H1489.5M1474.3 164.4V174.0M1474.3 152.8V162.4M1475.8 163.4H1491.0M1474.3 152.8Q1474.3 149.8 1477.3 149.8M1489.5 149.8Q1492.5 149.8 1492.5 152.8M1474.3 174.0Q1474.3 177.0 1477.3 177.0M1489.5 177.0Q1492.5 177.0 1492.5 174.0M1497.85 177.0L1512.85 149.8M1527.8 150.8V162.4M1527.8 164.4V177.0M1550.1499999999999 150.8V162.4M1550.1499999999999 164.4V177.0M1564.9 177.0L1579.9 149.8M1589.05 149.8H1601.25M1604.25 152.8V162.4M1587.55 163.4H1602.75M1586.05 164.4V174.0M1589.05 177.0H1601.25M1601.25 149.8Q1604.25 149.8 1604.25 152.8M1586.05 174.0Q1586.05 177.0 1589.05 177.0M1611.4 149.8H1623.6000000000001M1626.6000000000001 152.8V162.4M1626.6000000000001 164.4V174.0M1611.4 177.0H1623.6000000000001M1608.4 164.4V174.0M1608.4 152.8V162.4M1608.4 152.8Q1608.4 149.8 1611.4 149.8M1623.6000000000001 149.8Q1626.6000000000001 149.8 1626.6000000000001 152.8M1608.4 174.0Q1608.4 177.0 1611.4 177.0M1623.6000000000001 177.0Q1626.6000000000001 177.0 1626.6000000000001 174.0M1633.75 149.8H1645.95M1648.95 152.8V162.4M1632.25 163.4H1647.45M1630.75 164.4V174.0M1633.75 177.0H1645.95M1645.95 149.8Q1648.95 149.8 1648.95 152.8M1630.75 174.0Q1630.75 177.0 1633.75 177.0M1656.1 149.8H1668.3M1653.1 152.8V162.4M1654.6 163.4H1669.8M1671.3 164.4V174.0M1656.1 177.0H1668.3M1653.1 152.8Q1653.1 149.8 1656.1 149.8M1668.3 177.0Q1671.3 177.0 1671.3 174.0M1742 149.8H1753Q1756 149.8 1756 152.8V171.5" fill="none" stroke="#00d800" stroke-width="1.700" stroke-linecap="round"/></svg>
</div>
<div id="tree">
<svg class="abs" style="left:-2px;top:-2px" width="305" height="786" viewBox="0 194 305 786"><defs><linearGradient id="tGlobeL" x1="0" y1="0" x2="1" y2="1"><stop offset="0" stop-color="#1fa3c2"/><stop offset="1" stop-color="#22c3e0"/></linearGradient><linearGradient id="tStor" x1="0" y1="0.2" x2="1" y2="0.8"><stop offset="0" stop-color="#93d44a"/><stop offset="0.55" stop-color="#3fb350"/><stop offset="0.56" stop-color="#1f9e52"/><stop offset="1" stop-color="#1f9e52"/></linearGradient><linearGradient id="tPortL" x1="0" y1="0" x2="0" y2="1"><stop offset="0" stop-color="#5fc4d6"/><stop offset="1" stop-color="#2a8fb0"/></linearGradient><linearGradient id="tPortR" x1="0" y1="0" x2="0" y2="1"><stop offset="0" stop-color="#f28a1c"/><stop offset="1" stop-color="#e84a1a"/></linearGradient><linearGradient id="tExp" x1="0" y1="0" x2="1" y2="1"><stop offset="0" stop-color="#ffffff"/><stop offset="1" stop-color="#dcdcdc"/></linearGradient><clipPath id="cGlobe"><circle cx="25.700" cy="221" r="15.300"/></clipPath><clipPath id="cPort"><circle cx="66" cy="604.800" r="15.300"/></clipPath><clipPath id="cReg"><circle cx="106.600" cy="316.800" r="13.500"/></clipPath><clipPath id="cGrp"><circle cx="66.400" cy="653.500" r="13.200"/></clipPath></defs><rect x="19.7" y="263.3" width="13" height="13" rx="1.500" fill="url(#tExp)" stroke="#9b9b9b" stroke-width="1.200"/><path d="M22.7 269.8h7" stroke="#3f51a8" stroke-width="1.500"/><rect x="60.3" y="311.3" width="13" height="13" rx="1.500" fill="url(#tExp)" stroke="#9b9b9b" stroke-width="1.200"/><path d="M63.3 317.8h7" stroke="#3f51a8" stroke-width="1.500"/><path d="M66.8 314.3v7" stroke="#3f51a8" stroke-width="1.500"/><rect x="60.3" y="359.3" width="13" height="13" rx="1.500" fill="url(#tExp)" stroke="#9b9b9b" stroke-width="1.200"/><path d="M63.3 365.8h7" stroke="#3f51a8" stroke-width="1.500"/><path d="M66.8 362.3v7" stroke="#3f51a8" stroke-width="1.500"/><rect x="19.7" y="407.3" width="13" height="13" rx="1.500" fill="url(#tExp)" stroke="#9b9b9b" stroke-width="1.200"/><path d="M22.7 413.8h7" stroke="#3f51a8" stroke-width="1.500"/><path d="M26.2 410.3v7" stroke="#3f51a8" stroke-width="1.500"/><rect x="19.7" y="455.3" width="13" height="13" rx="1.500" fill="url(#tExp)" stroke="#9b9b9b" stroke-width="1.200"/><path d="M22.7 461.8h7" stroke="#3f51a8" stroke-width="1.500"/><path d="M26.2 458.3v7" stroke="#3f51a8" stroke-width="1.500"/><rect x="19.7" y="551.3" width="13" height="13" rx="1.500" fill="url(#tExp)" stroke="#9b9b9b" stroke-width="1.200"/><path d="M22.7 557.8h7" stroke="#3f51a8" stroke-width="1.500"/><path d="M26.2 554.3v7" stroke="#3f51a8" stroke-width="1.500"/><rect x="19.7" y="647.3" width="13" height="13" rx="1.500" fill="url(#tExp)" stroke="#9b9b9b" stroke-width="1.200"/><path d="M22.7 653.8h7" stroke="#3f51a8" stroke-width="1.500"/><path d="M26.2 650.3v7" stroke="#3f51a8" stroke-width="1.500"/><rect x="48" y="197" width="105" height="48" fill="#0078d7"/><path d="M48 197.500H153M48 244.500H153M48.500 197V245M152.500 197V245" fill="none" stroke="#1a1208" stroke-width="1" shape-rendering="crispEdges"/><path d="M48 197.500H153M48 244.500H153M48.500 197V245M152.500 197V245" fill="none" stroke="#ff9a2a" stroke-width="1" stroke-dasharray="1 1" shape-rendering="crispEdges"/><g><circle cx="25.700" cy="221" r="16.800" fill="#2a4d54"/><g clip-path="url(#cGlobe)"><rect x="9" y="204" width="16.800" height="34" fill="url(#tGlobeL)"/><rect x="25.800" y="204" width="17" height="34" fill="#7fd02e"/><path d="M25.700 204v34" stroke="#2f9a58" stroke-width="1.600"/><circle cx="25.700" cy="221" r="14.600" fill="none" stroke="#1b6f7a" stroke-width="1.400" opacity="0.450"/></g><circle cx="25.700" cy="221" r="12.600" fill="none" stroke="#20363a" stroke-width="1.200"/><ellipse cx="25.700" cy="221" rx="6.200" ry="12.600" fill="none" stroke="#20363a" stroke-width="1.100"/><path d="M25.700 208.400v25.200M13.100 221h25.200M14.800 215.200h21.800M14.800 226.800h21.800" stroke="#20363a" stroke-width="1.100" fill="none"/><path d="M18.600 212.600c2 -2.400 4.600 -3.600 7.100 -3.600s5.100 1.200 7.100 3.600c-2.300 0.900 -4.600 1.300 -7.100 1.300s-4.800 -0.400 -7.100 -1.300z" fill="#f4f4f4"/><path d="M18.600 229.400c2 2.400 4.600 3.600 7.100 3.600s5.100 -1.200 7.100 -3.600c-2.300 -0.900 -4.600 -1.300 -7.100 -1.300s-4.800 0.400 -7.100 1.300z" fill="#f4f4f4"/><path d="M22 209.800l-0.800 3.600M25.700 209v5M29.400 209.800l0.800 3.600M22 232.200l-0.800 -3.600M25.700 233v-5M29.400 232.200l0.800 -3.600" stroke="#44585a" stroke-width="0.900"/></g><g><circle cx="65.800" cy="269" r="14" fill="#f3f7ea" stroke="#1f5d46" stroke-width="2.800"/><path d="M56.500 262c1.500 -2.500 4 -4 6.500 -4.200l1 1.800 -1.800 2 1 2 -2 1.500 -0.500 3 2.500 3 -1 3.500 -1.800 2 -1.500 -3 -2.200 -3.500 -1.500 -3z" fill="#2fa450"/><path d="M68 258.500c3 0 6 1.500 8 4l-1 2 1.500 2.500 -1 3 -2.500 0.500 -1 3.500 -2 2 -1.500 -3.500 0.500 -3 -2 -1.500 0 -3.500 1.500 -2z" fill="#2fa450"/><path d="M65.800 255.500v27M52.300 269.500h27" stroke="#1f5d46" stroke-width="1.400"/></g><g><circle cx="106.600" cy="316.800" r="16.700" fill="#1c2a38"/><circle cx="106.600" cy="316.800" r="14.800" fill="none" stroke="#dfe8ea" stroke-width="0.900"/><g clip-path="url(#cReg)"><rect x="92" y="302" width="30" height="30" fill="#1f8aa6"/><path d="M106 302l16 0v32h-5.500l-1 -22 -3 -7z" fill="#16222e"/><path d="M96 320l4 14h12l-10 -10z" fill="#16222e"/><path d="M98.500 312c0 -4 3 -6.500 5.500 -6.500l2 -1 2.500 1.500 3 0 -2 2.500 -2 0.500 -0.500 4 -3 3.500 -3.500 1 -1.500 -2z" fill="#58b82e"/><path d="M110 309l4.500 -4 0.500 12 -4 -1 -2.500 -3.500z" fill="#1f93a6" stroke="#dfe8ea" stroke-width="0.700"/><path d="M103 320l5 -4 7.500 2 0.500 6 -3 3 -2.500 -0.500 -2 2.500 -3 -2.500z" fill="#1e8f9f" stroke="#dfe8ea" stroke-width="0.700"/><path d="M115.500 303.500v24" stroke="#f4f8f8" stroke-width="1.100"/></g></g><g stroke-linecap="round" fill="none"><path d="M96 382.500h21" stroke="#8fd0e8" stroke-width="1.600"/><path d="M96.500 357c3 -2 6 -2.500 9.500 -2M96.500 362c3 -2 6 -2.500 9.500 -2M97 367c3 -2 6 -2.500 9 -2" stroke="#3fb3cc" stroke-width="2"/><path d="M116.500 357c-3 -2 -6 -2.500 -9.500 -2M117 362c-3 -2 -6 -2.500 -9.500 -2M116.500 367c-3 -2 -6 -2.500 -9 -2" stroke="#4a6474" stroke-width="2"/><path d="M106.300 349l-2.500 13 -5.500 20M106.300 349l2.500 13 5.500 20" stroke="#4f6d80" stroke-width="1.800"/><path d="M103 366l7.500 6 -10 9M109.600 366l-7.500 6 10 9M102 374h8.600M103.500 362h5.600M104 358l4.600 4 -5.600 4M108.600 358l-4.600 4 5.600 4M100.500 378h11.600" stroke="#5b7b8e" stroke-width="1.300"/><path d="M106.300 349v16" stroke="#4f6d80" stroke-width="2.200"/></g><g><circle cx="65.800" cy="413.200" r="16.500" fill="#1b5c3e"/><circle cx="65.800" cy="413.200" r="14" fill="#1f9a50" opacity="0.550"/><circle cx="65.800" cy="413.200" r="12.500" fill="#1c2e33"/><circle cx="65.800" cy="413.200" r="11.200" fill="none" stroke="#93a5a3" stroke-width="0.800"/><path d="M68.500 401.500l-7.500 12h4.500l-3 9 8.500 -12.500h-4.500z" fill="#2fb950" stroke="#58d878" stroke-width="0.500"/><path d="M63 421.500l-4 6.500" stroke="#e8f2ea" stroke-width="1.300"/></g><g><circle cx="65.800" cy="461" r="16.500" fill="#c2571a"/><circle cx="65.800" cy="461" r="14.800" fill="#f56d10"/><path d="M58.500 449h12l3 3v20.500h-15z" fill="#eef1f2" stroke="#d8dfe2" stroke-width="0.800"/><g fill="#5f7887"><rect x="63.800" y="450.500" width="4" height="6.500" rx="1"/><rect x="60" y="452.500" width="2" height="2"/><rect x="70" y="452.500" width="2" height="2"/><rect x="60" y="459.500" width="11.500" height="1.500"/><rect x="60" y="462.500" width="11.500" height="1.800"/><rect x="60" y="467" width="5" height="1.500"/><rect x="66.500" y="466" width="5" height="1.500"/><rect x="60" y="469.500" width="11" height="1.800"/></g></g><g><circle cx="66.200" cy="508.600" r="16.300" fill="#11d880" stroke="#166139" stroke-width="2"/><path d="M59 498.500h9l5 4.500v15.500a1 1 0 0 1 -1 1h-13a1 1 0 0 1 -1 -1v-19a1 1 0 0 1 1 -1z" fill="#2fae5e" stroke="#18603a" stroke-width="1.500"/><rect x="59.800" y="499.800" width="6.200" height="18.500" fill="#b5efa2"/><path d="M68 498.500v4.500h5z" fill="#9fe8a0" stroke="#18603a" stroke-width="1"/><g stroke="#1a6a40" stroke-width="1.100"><path d="M60 503h9M60 506h12M60 509h12M60 512h12M60 515h7"/></g><rect x="67.800" y="513" width="3.800" height="4" fill="#2a9a58" stroke="#b5efa2" stroke-width="0.600"/></g><g><circle cx="66" cy="556.500" r="16.300" fill="url(#tStor)" stroke="#2a7d47" stroke-width="1.800"/><rect x="63.500" y="543.800" width="5.500" height="3" fill="#9aa0a3"/><rect x="59.800" y="546.200" width="13" height="23" rx="1.500" fill="#d9dcd8" stroke="#858b8e" stroke-width="1.400"/><rect x="61.200" y="548" width="10.200" height="2.600" fill="#e6e8e6"/><rect x="61.200" y="551.400" width="10.200" height="2.800" fill="#69c837"/><rect x="61.200" y="554.900" width="10.200" height="2.800" fill="#7fca38"/><rect x="61.200" y="558.400" width="10.200" height="2.800" fill="#b9c93a"/><rect x="61.200" y="561.900" width="10.200" height="2.800" fill="#d8b73a"/><rect x="61.200" y="565.400" width="10.200" height="2.600" fill="#e3712c"/></g><g><circle cx="66" cy="604.800" r="16.300" fill="#1e3a4a"/><g clip-path="url(#cPort)"><rect x="50" y="589" width="16" height="32" fill="url(#tPortL)"/><rect x="66" y="589" width="17" height="32" fill="url(#tPortR)"/><rect x="53.500" y="597" width="5" height="16" fill="#3a98b2" opacity="0.800"/><rect x="72.500" y="595" width="4" height="18" fill="#c85a16"/><rect x="77" y="599" width="3.500" height="14" fill="#d4621a"/><rect x="60" y="594" width="3" height="19" fill="#556a74"/><rect x="63" y="591" width="4" height="22" fill="#e2e0d6"/><rect x="67" y="592.500" width="4.500" height="20.500" fill="#8a4a1e"/><rect x="64.200" y="592" width="1.200" height="20" fill="#b9b8ae"/><rect x="50" y="612.500" width="33" height="9" fill="#1f7389"/><rect x="54" y="613.500" width="24" height="1.300" fill="#8fd8e4"/><rect x="50" y="617.500" width="33" height="4" fill="#1a5f74"/></g></g><g><circle cx="66.400" cy="653.500" r="14" fill="#e9533b" stroke="#7a3024" stroke-width="1"/><g clip-path="url(#cGrp)"><path d="M66.500 645l14 12 -4 12 -14 0 -2 -6z" fill="#b93b23"/></g><path d="M66.400 643.500c3 4.500 6.500 8.500 6.500 12.500a6.500 6.500 0 0 1 -13 0c0 -4 3.500 -8 6.500 -12.500z" fill="#e9533b" stroke="#4a4a4e" stroke-width="2.600"/><path d="M66.400 643.500c3 4.500 6.500 8.500 6.500 12.500a6.500 6.500 0 0 1 -13 0c0 -4 3.500 -8 6.500 -12.500z" fill="none" stroke="#e4e4e6" stroke-width="1.300"/><path d="M66.400 650c1.500 2.500 3.200 4.500 3.200 6.500a3.200 3.200 0 0 1 -6.400 0c0 -2 1.700 -4 3.200 -6.500z" fill="#f06a50"/><rect x="55" y="653" width="2.500" height="1.200" fill="#f4b0a0"/></g></svg><div class="tr" style="left:49.9px;top:13px;letter-spacing:-0.73px;color:#fff">HISTORICAL</div><div class="tr" style="left:90.0px;top:61px;letter-spacing:-1.24px;color:#000">WESM</div><div class="tr" style="left:130.0px;top:109px;letter-spacing:-1.10px;color:#000">WESM REGIONS</div><div class="tr" style="left:130.0px;top:157px;letter-spacing:-0.84px;color:#000">WESM LINKS</div><div class="tr" style="left:90.0px;top:205px;letter-spacing:-1.52px;color:#000">PROFILES</div><div class="tr" style="left:90.0px;top:253px;letter-spacing:-1.09px;color:#000">TARIFFS</div><div class="tr" style="left:90.0px;top:301px;letter-spacing:-0.68px;color:#000">CONTRACTS</div><div class="tr" style="left:90.0px;top:349px;letter-spacing:-1.53px;color:#000">STORAGES</div><div class="tr" style="left:90.0px;top:397px;letter-spacing:-0.97px;color:#000">PORTFOLIOS</div><div class="tr" style="left:90.0px;top:445px;letter-spacing:-1.54px;color:#000">GROUPS</div>
</div>
<div id="gap"></div>
<div id="rp"><i style="left:0;top:0;width:1px;height:784px;background:#cfcfcf"></i><i style="left:1px;top:1px;width:1px;height:783px;background:#9a9a9a"></i><i style="left:2px;top:1px;width:1px;height:783px;background:#7c7c7c"></i><i style="left:3px;top:2px;width:2px;height:782px;background:#636363"></i><i style="left:5px;top:5px;width:1px;height:779px;background:#dedede"></i><i style="left:0;top:0;width:1610px;height:1px;background:#d4d4d4"></i><i style="left:1px;top:1px;width:1609px;height:1px;background:#8c8c8c"></i><i style="left:3px;top:2px;width:1607px;height:3px;background:#666"></i><i style="left:1601px;top:5px;width:4px;height:736px;background:#efefef"></i><i style="left:1605px;top:2px;width:2px;height:739px;background:#a8a8a8"></i><i style="left:1607px;top:2px;width:2px;height:739px;background:#787878"></i><i style="left:1609px;top:2px;width:1px;height:739px;background:#9a9a9a"></i></div>
<div id="view">
<div id="hdr">Scenario Summary Report</div>
<div class="h2" style="top:104px">Scenario Information</div><div class="ul" style="top:131px"></div>
<table style="top:140px"><colgroup><col style="width:264px"><col style="width:174px"><col style="width:254px"><col style="width:529px"><col style="width:255px"></colgroup><tr style="height:33px"><th>Scenario ID</th><th>Samples</th><th>iPool Version</th><th>Run Date</th><th>Elapsed Time</th></tr><tr style="height:32px"><td>HISTORICAL</td><td>1</td><td>25.9</td><td style="letter-spacing:0.65px">10/13/2025 2:35:54 PM</td><td style="letter-spacing:0.4px">00:06:15</td></tr></table>
<div class="cmd"><div class="cl">Commandline</div><div class="cv">-o BASE -s HISTORICAL -hist-rb-x-updatedb</div></div>
<table style="top:261px"><colgroup><col style="width:175px"><col style="width:126px"><col style="width:324px"><col style="width:183px"><col style="width:132px"><col style="width:176px"><col style="width:360px"></colgroup><tr style="height:32px"><th style="letter-spacing:-0.3px">Date Start</th><th>Days</th><th>Database</th><th>Demand File</th><th>Bid Type</th><th>Outages</th><th>Events</th></tr><tr style="height:32px"><td>8/11/2025</td><td>7 days</td><td>SysWESM25T.mdb</td><td>Historical</td><td>Bids</td><td>FromBids</td><td>No Event File Loaded</td></tr></table>
<div class="h2" style="top:351px;letter-spacing:-0.5px">Market Summary</div><div class="ul" style="top:378px"></div>
<table style="top:388px"><colgroup><col style="width:164px"><col style="width:164px"><col style="width:164px"><col style="width:164px"><col style="width:164px"><col style="width:164px"><col style="width:164px"><col style="width:164px"><col style="width:164px"></colgroup><tr style="height:51px"><th>POOL</th><th>Installed MW Gen<br>Capacity</th><th>Generation Price</th><th>Generation GWh</th><th>Demand GWh</th><th>Net Energy GWh</th><th>% Capacity Factor</th><th>% Availability Factor</th><th>Max Demand MW</th></tr><tr style="height:32px"><td>Pool</td><td>33,806</td><td>2,969.28</td><td>2,402.8</td><td>2,402.8</td><td>-0.002</td><td>42.3</td><td>57.1</td><td>17,437</td></tr></table>
<table class="nob" style="top:480px"><colgroup><col style="width:164px"><col style="width:164px"><col style="width:164px"><col style="width:164px"><col style="width:164px"><col style="width:164px"><col style="width:164px"><col style="width:164px"><col style="width:164px"></colgroup><tr style="height:50px"><th>Zones</th><th>Installed MW Gen<br>Capacity</th><th>Generation Price</th><th>Generation GWh</th><th>Demand GWh</th><th>Net Energy GWh</th><th>% Capacity Factor</th><th>% Availability Factor</th><th>Max Demand MW</th></tr></table>
<table class="reg" style="top:538px"><colgroup><col style="width:164px"><col style="width:164px"><col style="width:164px"><col style="width:164px"><col style="width:164px"><col style="width:164px"><col style="width:164px"><col style="width:164px"><col style="width:164px"></colgroup><tr style="height:51px"><th>Regions</th><th>Installed MW Gen<br>Capacity</th><th>Generation Price</th><th>Generation GWh</th><th>Demand GWh</th><th>Net Energy GWh</th><th>% Capacity Factor</th><th>% Availability Factor</th><th>Max Demand MW</th></tr><tr style="height:33px"><td>CLUZ</td><td>23,876</td><td>2744.4</td><td>1,744.2</td><td>1,721.3</td><td>22.976</td><td>43.5</td><td>59.2</td><td>12,422</td></tr><tr style="height:33px" class="alt"><td>CVIS</td><td>4,495</td><td>3750.8</td><td>250.4</td><td>330.5</td><td>-80.158</td><td>33.2</td><td>36.1</td><td>2,508</td></tr><tr style="height:32px"><td>CMIN</td><td>5,435</td><td>3287.4</td><td>408.2</td><td>351.0</td><td>57.179</td><td>44.7</td><td>64.8</td><td>2,570</td></tr></table>
<div class="h2" style="top:713px;letter-spacing:-0.7px">Fuel Types Summary</div><div class="ul" style="top:739px"></div>
<div class="sb"><svg width="22" height="742" viewBox="0 0 22 742"><path d="M11.500 10.500l6.500 9a1 1 0 0 1 -.8 1.500h-11.400a1 1 0 0 1 -.8 -1.500z" fill="#8b8b8b"/><rect x="5.200" y="30.500" width="13" height="306" rx="6.500" fill="#8b8b8b"/><path d="M11.500 736l6.500 -9a1 1 0 0 0 -.8 -1.500h-11.400a1 1 0 0 0 -.8 1.500z" fill="#8b8b8b"/></svg></div>
</div>
<div id="tabbar2"></div>
<div id="tabbar">
<svg class="abs" style="left:0;top:0" width="130" height="38" viewBox="314 940 130 38"><path d="M314 940H434V970.500L427.500 977H320L314 971Z" fill="#767676"/><path d="M314 940H432V969.800L426.500 975.500H320.500L314 969.300Z" fill="#a9a9a9"/><path d="M314 940H429.500V969L425 973.300H321.800L314 966Z" fill="#f0f0f0"/><path d="M314 940H316.300V968L314 966Z" fill="#fff"/></svg><div class="abs" style="left:13px;top:-1.200px;font-size:24px;line-height:31px;letter-spacing:1.350px;color:#000;white-space:nowrap;-webkit-text-stroke:0.25px #000">Browser</div>
</div>
<div id="status">
<span style="left:2.400px;letter-spacing:0.900px">Done</span>
<span style="left:1714.300px;letter-spacing:0.300px">iPool</span><i style="left:1759px"></i><span style="left:1766.200px;letter-spacing:0.250px">SimDate</span><i style="left:1837px"></i><span style="left:1844.600px;letter-spacing:0.600px">SimTime</span>
</div>
</body>
</html>
